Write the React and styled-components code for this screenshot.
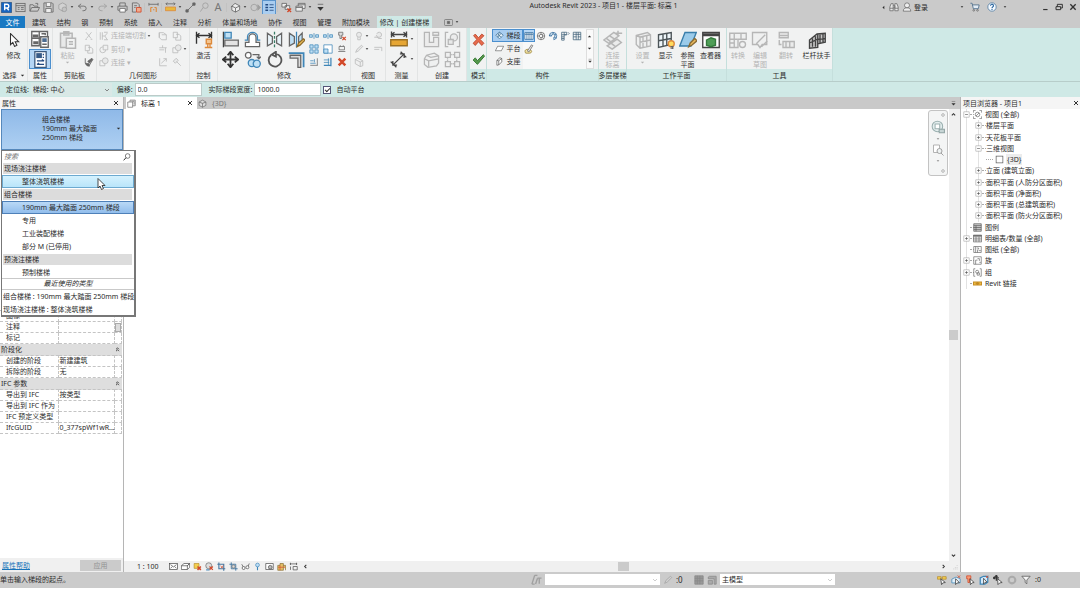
import { useState } from "react";
import styled, { createGlobalStyle, css } from "styled-components";

const GlobalStyle = createGlobalStyle`
    * { box-sizing: border-box; }

    body {
        margin: 0;
        background: #fff;
        color: #2b2b2b;
        font: 7px/11px "Noto Sans", "Noto Sans CJK SC", sans-serif;
    }

    button, input, select {
        margin: 0;
        padding: 0;
        border: 0;
        background: transparent;
        color: inherit;
        font: inherit;
    }

    button { cursor: default; white-space: nowrap; }
    ul { margin: 0; padding: 0; list-style: none; }
    svg { display: block; flex: none; }
`;

/* ---------- icons, all on a 24 unit grid ---------- */

const G = "#666";
const B = "#3f86b8";
const LB = "#bfe0f5";
const O = "#dd8a3c";
const R = "#d2492a";
const Y = "#e8b83c";

const shapes = {
    logo: <><rect width="24" height="24" rx="2" fill="#1765c0" /><path d="M8 18V5h5a4 4 0 0 1 0 8H8m5 0 4 5" fill="none" stroke="#fff" strokeWidth="3" /></>,
    home: <><rect x="2" y="3" width="20" height="18" /><path d="M2 8h20M6 12h4M6 16h4M13 12h6M13 16h6" /></>,
    open: <><path d="M2 20V6h7l2 3h8v3M2 20l4-8h17l-4 8z" /><path d="M14 3h5v4" /></>,
    save: <><path d="M2 2h18l2 2v18H2z" /><path d="M7 2v8h10V2M6 22v-8h12v8" fill="#eee" /></>,
    sync: <><path d="M4 6 12 2l8 4v9l-8 5-8-5z" fill="#ddd" /><circle cx="16" cy="16" r="5" fill="#bbb" /></>,
    undo: <path d="M9 4 3 9l6 5M3 9h12a5 5 0 0 1 0 10h-3" />,
    redo: <path d="m15 4 6 5-6 5m6-5H9a5 5 0 0 0 0 10h3" />,
    print: <><path d="M6 9V2h12v7M6 18H2V9h20v9h-4" /><path d="M6 14h12v8H6z" fill="#fff" /></>,
    pdf: <><path d="M3 2h11l4 4v8M3 2v20h8" /><path d="M12 12h10v10H12z" fill="#f2ab8c" stroke={R} /><path d="M7 8h6M7 12h3" /></>,
    measure: <><path d="M2 5h20M2 2v6M22 2v6" /><path d="M6 12v10M6 12h4M18 12v10M14 12h4M11 17h3" stroke={O} strokeWidth="2.500" /></>,
    ruler: <><path d="M2 4h20M5 1 2 4l3 3M19 1l3 3-3 3" /><path d="M1 11h22v8H1z" fill={Y} stroke={O} /></>,
    line: <><path d="M5 19 19 5" /><path d="M2 17h5v5H2zM17 2h5v5h-5z" fill={G} /></>,
    tag: <><circle cx="14" cy="8" r="6" /><path d="m9 12-6 9" /></>,
    house: <><path d="M2 11 11 3l11 6M4 10v8l8 4 9-5V9M12 22v-9L4 9m8 4 9-4" fill="#eee" /></>,
    section: <><circle cx="9" cy="12" r="7" /><path d="m17 6 6 6-6 6z" fill={G} /></>,
    thin: <><path d="M3 6h6M3 12h6M3 18h6" stroke="#234a80" strokeWidth="3" /><path d="M12 6h9M12 12h9M12 18h9" stroke="#234a80" /></>,
    closeWin: <><path d="M2 3h10v8H2zM9 8h10v8H9z" fill="#eee" /><path d="m14 14 8 8m0-8-8 8" stroke={R} strokeWidth="3" /></>,
    windows: <><path d="M2 9h14v11H2zM7 9V3h15v11h-6" fill="#eee" /><path d="M2 12h14M7 6h15" /></>,
    more: <><path d="M6 5h12" /><path d="M5 11h14l-7 8z" fill="#333" stroke="none" /></>,
    caret: <path d="M4 8h16l-8 9z" fill="currentColor" stroke="none" />,
    caretUp: <path d="M4 16h16l-8-9z" fill="currentColor" stroke="none" />,
    caretLeft: <path d="M16 4v16l-9-8z" fill="currentColor" stroke="none" />,
    chevDown: <path d="m4 8 8 8 8-8" strokeWidth="3" />,
    chevUp: <path d="m4 16 8-8 8 8" stroke="#333" strokeWidth="5" />,
    chevDownBold: <path d="m4 8 8 8 8-8" stroke="#333" strokeWidth="5" />,
    chevRight: <path d="m8 4 8 8-8 8" stroke="#333" strokeWidth="5" />,
    chevLeft: <path d="m16 4-8 8 8 8" stroke="#333" strokeWidth="5" />,
    collapse: <path d="m5 11 7-7 7 7M5 20l7-7 7 7" stroke="#333" strokeWidth="4" />,
    close: <path d="m4 4 16 16M20 4 4 20" stroke="#333" strokeWidth="4" />,
    play: <><rect x="1" y="4" width="22" height="16" rx="3" /><path d="M9 9h6v6H9z" fill={G} /></>,
    binoculars: <><path d="M2 21v-9l3-8h5v17zM22 21v-9l-3-8h-5v17zM10 9h4v5h-4M2 15h8M14 15h8" fill="#e6e6e6" /></>,
    user: <><circle cx="12" cy="8" r="6" fill="#eee" /><path d="M3 22c0-6 4-8 9-8s9 2 9 8z" fill="#eee" /></>,
    cart: <><path d="M1 3h4l3 13h12l2-9H6" fill="#e4edf5" stroke="#3c5f80" /><circle cx="9" cy="20" r="2" /><circle cx="18" cy="20" r="2" /></>,
    help: <><circle cx="12" cy="12" r="10" fill="#f5faff" stroke="#45729c" /><path d="M8.500 9a3.500 3.500 0 1 1 5 3c-1 .7-1.500 1-1.500 3M12 17v2" stroke="#1d5b97" strokeWidth="2.500" /></>,
    minimize: <path d="M4 19h15" stroke="#333" strokeWidth="4" />,
    restore: <><path d="M3 11h14v9H3zM7 11V4h15v11h-5" stroke="#333" strokeWidth="3" /></>,
    cursor: <path d="M6 1v19l4-4 3 7 4-2-3-6h6z" fill="#fff" stroke="#333" />,
    typeProps: <><path d="M1 2h10v9H1zM11 2h11v9H11zM1 11h10v10H1z" fill="#fff" /><path d="M13 9h10v14H13z" fill="#fff" /><path d="M15 11h6v5h-6z" fill="#4d6c91" stroke="none" /><path d="M3 7h6v2H3zM14 5h5v2M3 16h6v2H3M15 19h6" /></>,
    props: <><path d="M4 1h16v22H4z" fill="#fff" stroke="#3c5a7d" /><path d="M6 3h8v7H6z" fill="#375a86" stroke="none" /><path d="M16 4v2M16 8v2M7 14h10m-3-2 3 2M17 19H7m3-2-3 2" stroke="#234a80" /></>,
    paste: <><path d="M3 4h14v17H3zM7 2h6v4H7z" fill="#ddd" /><path d="M10 10h11v12H10z" fill="#f3f3f3" /><path d="M13 14h5M13 17h5" /></>,
    cut: <path d="m5 3 12 15M18 3 6 18M3 20h4M16 20h4" />,
    copyPage: <path d="M3 3h10v13H3zM10 8h7l4 4v10H9v-6" />,
    brush: <><path d="M3 3v12l5 5h5l8-14" stroke="#555" /><path d="m9 10 10-7 2 3-8 9zM4 15c0 5 4 7 9 7l-1-6z" fill="#666" /></>,
    cope: <path d="M3 3v18M8 3v18M8 12h6l6-7M14 12l6 9M12 3h9M12 21h9" />,
    boolCut: <><circle cx="9" cy="14" r="7" /><path d="M10 3h11v11H10z" fill="#eee" /></>,
    join: <><path d="M2 9h12v12H2z" /><circle cx="15" cy="9" r="7" fill="#ddd" /></>,
    slab: <path d="M3 4h10l7 5v12H9l-6-5zM3 4v12M9 9h11" />,
    wall: <path d="M3 9h18M3 14h12M11 3v6M18 9v12" />,
    split: <path d="M4 3v18h17M8 15 20 4M13 4h7v7" />,
    hammer: <path d="m3 10 7-7 5 5-7 7zM11 11l10 10" fill="#ddd" />,
    activate: <><path d="M2 1v16M22 1v9M2 6h20M6 3 2 6l4 3M18 3l4 3-4 3" stroke="#333" /><path d="M15 11h7v6h-7zM17 17v5m3-5v5M13 22h10" fill="#f4c590" stroke={O} /></>,
    align: <><path d="M2 1v22" stroke="#444" /><path d="M4 2h9v8H4z" fill={LB} stroke={B} /><path d="M4 13h19v8H4z" fill="#e3e3e3" /></>,
    offset: <><path d="M2 22h20v-6h-5V9a5 5 0 0 0-10 0v7H2z" fill="#fff" /><path d="M1 13h4V8a7 6 0 0 1 14 0v5h4" stroke={B} /></>,
    mirrorAxis: <><path d="M2 3v18l7-4V8zM22 3v18l-7-4V8z" fill="#e9f4fa" /><path d="M12 1v22" strokeDasharray="4 2" stroke="#3a7d67" /></>,
    mirrorDraw: <><path d="M2 3v18l7-4V8zM20 3v10l-5 4V8z" fill={LB} /><path d="M12 1v22" stroke={B} /><path d="m13 22 2-5 7-6 2 2-7 7z" fill="#efc25d" stroke="#8d6a29" /></>,
    move: <path d="M12 1v22M1 12h22M8 6l4-5 4 5M8 18l4 5 4-5M6 8l-5 4 5 4M18 8l5 4-5 4" stroke="#333" strokeWidth="2.500" />,
    copy: <><circle cx="6" cy="6" r="4" fill="#fff" /><circle cx="11" cy="17" r="5" fill={LB} stroke={B} /><circle cx="18" cy="18" r="5" fill={LB} stroke={B} /><path d="M12 5h9v5m-3-2 3 3 3-3" /></>,
    rotate: <path d="M14 4a9 9 0 1 1-7 2M14 1v7L8 5z" stroke="#555" strokeWidth="2.500" />,
    trim: <><path d="M3 6h15v17h-4V10H3z" fill="#dcdcdc" /><path d="M1 3h21v20" stroke={B} strokeWidth="2.500" /></>,
    splitEl: <path d="M1 9h7v6H1zM16 9h7v6h-7zM12 5v14" fill={LB} stroke={B} />,
    array: <path d="M2 2h8v8H2zM14 2h8v8h-8zM2 14h8v8H2zM14 14h8v8h-8z" fill={LB} stroke={B} />,
    scale: <><path d="M2 2h20v20H2z" fill="#fff" stroke={B} /><path d="M2 12h10v10H2z" fill={LB} stroke={B} /></>,
    pin: <><path d="M4 3h10v7h-3v8H7v-8H4z" fill="#ddd" /><path d="m13 14 8 8m0-8-8 8" stroke={R} strokeWidth="3" /></>,
    unpin: <path d="M5 6h13v8H5zM3 18h17M8 3v3M15 3v3" />,
    trimOne: <><path d="M3 15h13M3 9h8m2-4v8" stroke={B} /><path d="M20 3v18M3 20h17" /></>,
    trimMany: <><path d="M2 7h13M2 13h13M13 3v17" stroke={B} /><path d="M19 2v20M2 20h17" strokeWidth="3" stroke={B} /></>,
    redX: <path d="m4 4 16 16M20 4 4 20" stroke={R} strokeWidth="6" />,
    bulb: <><circle cx="12" cy="9" r="6" fill="#ddd" /><path d="M9 15v6h6v-6" /></>,
    pencilLine: <path d="m4 20 3-7L18 3l3 3-11 11z" fill="#ddd" />,
    cube: <path d="m3 6 6-3 12 6v12l-6 2L3 16zM3 6l12 6 6-3M15 12v11" fill="#eee" />,
    hide: <path d="M3 15h12a6 6 0 1 0-6-8M8 10l5 8h8" fill="#ddd" />,
    linework: <path d="M3 8h18v9M3 13h12" />,
    measureBig: <><path d="M2 6h20M2 2v8M22 2v8M6 3 2 6l4 3M18 3l4 3-4 3" stroke="#444" /><path d="M1 13h22v8H1z" fill="#e6a634" stroke="#9b7125" /></>,
    measureDiag: <path d="M4 20 20 4M1 15l8 8M15 1l8 8M4 14v6h6M14 4h6v6" stroke="#444" />,
    createSim: <path d="M2 2v20h20V9h-7v7H9V2zM14 2h8v4h-8z" fill="#e6e6e6" />,
    group: <><path d="M6 2H2v20h4M18 2h4v20h-4" /><circle cx="14" cy="9" r="5" fill="#e6e6e6" /><path d="M6 12h7v7H6z" fill="#ddd" /></>,
    createBox: <path d="m2 11 3-5 11-3 6 4v10l-3 4-12 2-5-4zM2 11l6 3 14-3M8 14v8M5 6l6 3 11-2" fill="#eee" />,
    assembly: <><path d="M2 2h7v7H2zM15 2h7v7h-7zM2 15h7v7H2zM15 15h7v7h-7z" fill="#eee" /><path d="M9 5h6M5 9v6M18 9v6M9 18h6" strokeDasharray="2 1" /></>,
    cancel: <path d="m3 5 3-3 6 7 6-7 4 3-7 7 7 7-4 4-6-7-6 7-4-4 7-7z" fill="#e86a4c" stroke="#bd5037" />,
    finish: <path d="m2 13 4-4 4 5L21 3l2 3-13 15z" fill="#56984c" stroke="#397a35" />,
    run: <path d="m2 11 10-8 10 8-10 10zM7 8l10 9M12 3 7 16M16 6l-8 12" fill="#e8f3fb" stroke="#37698d" />,
    landing: <path d="M7 6h16l-6 12H1z" fill="#fff" />,
    support: <path d="M5 22V9l8-7 5 2v9l-8 8zM10 21V10l8-6M5 9l5 1" fill="#fff" stroke="#555" />,
    straight: <path d="M2 4h20v16H2zM7 4v16M12 4v16M17 4v16M2 8h20" fill="#fff" stroke="#2e6697" />,
    spiral: <><circle cx="12" cy="12" r="9" /><circle cx="12" cy="12" r="4" /><path d="M12 3v5M21 12h-5M12 16v5M3 12h5M18 6l-3 3M18 18l-3-3" /></>,
    arcStair: <path d="M3 12a9 9 0 1 1 11 9v-6a4 4 0 1 0-5-4M3 12l3-3 3 3zM12 3v5M20 8l-5 2M20 17l-5-2" fill="#e6f3fc" stroke="#2e6697" />,
    lWinder: <path d="M4 22V3h12v6H10v13zM4 9h12M4 14h6M4 18h6M10 3v6M19 3l3 3-3 3" stroke="#3f6079" />,
    uWinder: <path d="M3 3h18v18M3 8h18M3 14h8M14 14h7M3 3v18h18M10 3v18M15 3v18" stroke="#3f6079" />,
    sketch: <><path d="M4 22c-4-7 0-10 8-9s9 9 0 9z" fill="#f4e5a4" stroke="#927b31" /><path d="m8 17 10-15 3 2-9 15z" fill="#eee" /></>,
    multi: <path d="M1 12 13 3l6 4-12 9zM5 19l12-8 5 4-11 8zM18 1v7M15 4h8M4 10l5 4M8 7l6 4M10 16l5 4" fill="#e4e4e4" />,
    setPlane: <path d="m3 6 15-4 4 3v15L8 23l-5-5zM3 6l5 2v15M8 8l14-3M12 7v15M17 6v15M8 15l14-3" fill="#eee" />,
    showPlane: <><path d="m2 5 17-3v16L2 22zM2 13l17-3M8 4v17M13 3v16" fill="#edf5f9" stroke="#4c5458" /><circle cx="19" cy="17" r="4" fill="#ffdc5f" stroke={O} /><path d="M18 21h3v3h-3" /></>,
    refPlane: <><path d="M8 2h15l-7 18H1z" fill="#9bcbea" stroke="#397eab" /><path d="m13 21 2-5 6-6 3 3-7 6z" fill="#e7b75b" stroke="#896b35" /></>,
    viewer: <><path d="M1 2h22v20H1z" fill="#fff" stroke="#444" /><path d="M1 5h22" stroke="#444" strokeWidth="4" /><path d="m6 12 6-3 6 2v8l-6 2-6-2z" fill="#4f9e57" stroke="#347a3d" /></>,
    convert: <><path d="M1 3h22v8H12v11H1zM1 11h10M7 3v19M16 3v8M1 16h6" fill="#eee" /><circle cx="18" cy="18" r="4" /></>,
    editSketch: <path d="M2 2h19v16h-6l-3 4-3-4H2zM7 17l12-12M14 21l8-8" fill="#eee" />,
    flip: <path d="M3 2h12v7H3zM8 14h15v8H8zM3 12v6h3M3 6h12M12 14v8M17 14v8" fill="#e5e5e5" />,
    railing: <path d="M2 12 12 4l11-1v12l-10 2v5L2 23zM2 16l11-5 10-1M6 10v11M10 7v14M16 5v11M20 4v11M13 4v17" fill="#c8c8c8" stroke="#444" />,
    viewTab: <><path d="M2 8h13v14H2z" fill="#fff" /><path d="M8 8V3h14v15h-7M12 6h7M19 6v9" /></>,
    cube3d: <><path d="m3 8 9-5 9 5v9l-9 5-9-5zM3 8l9 4 9-4M12 12v10" fill="#ddd" /></>,
    search: <><circle cx="14" cy="9" r="7" stroke="#333" /><path d="m9 14-7 8" stroke="#333" strokeWidth="3" /></>,
    plus: <><rect x="3" y="3" width="18" height="18" fill="#fff" stroke="#999" /><path d="M7 12h10M12 7v10" stroke="#333" /></>,
    minus: <><rect x="3" y="3" width="18" height="18" fill="#fff" stroke="#999" /><path d="M7 12h10" stroke="#333" /></>,
    views: <><circle cx="12" cy="12" r="6" /><path d="M1 7V1h6M17 1h6v6M23 17v6h-6M7 23H1v-6M8 16l8-8" /></>,
    square: <rect x="3" y="3" width="18" height="18" stroke="#555" fill="#fff" />,
    legend: <><path d="M2 2h20v20H2z" fill="#ccc" stroke="#555" /><path d="M2 7h20M2 12h20M2 17h20M8 7v15" stroke="#555" /></>,
    schedule: <><path d="M1 3h22v18H1z" fill="#fff" stroke="#555" /><path d="M1 5h22" strokeWidth="4" /><path d="M1 11h22M1 16h22M8 7v14M16 7v14" /></>,
    sheet: <path d="M2 4h20v16H2zM7 4v16M10 8h5v4M15 15h6M12 12v8" fill="#fff" />,
    family: <path d="M2 2h20v20H2zM7 22V11h5M12 7h5v6M17 17h4" fill="#fff" />,
    groups: <><path d="M6 2H2v20h4M18 2h4v20h-4" /><circle cx="11" cy="10" r="4" /><path d="M11 13h6v6h-6z" /></>,
    link: <path d="M1 8h10v8H1zM13 8h10v8H13zM7 12h10" fill="#f0bc42" stroke="#c28a22" strokeWidth="3" />,
    detail: <><rect x="1" y="4" width="22" height="16" fill="#fff" stroke="#444" /><path d="m4 7 8 6 8-6M4 17l5-5M20 17l-5-5" stroke="#444" /></>,
    shade: <path d="M8 4h15l-6 6v10H1V10zM1 10h16l6-6v10l-6 6" fill="#fff" stroke="#444" />,
    sun: <><path d="M3 4h13v13H3z" fill="#f3cf50" stroke="#b78c2d" /><path d="m12 12 9 9m0-9-9 9" stroke={R} strokeWidth="4" /></>,
    shadow: <><circle cx="10" cy="10" r="8" fill="#ddd" /><path d="m12 12 9 9m0-9-9 9" stroke={R} strokeWidth="3" /><path d="M3 21h9" stroke={B} strokeWidth="3" /></>,
    crop: <><path d="M5 1v17h17M1 6h17v17" stroke="#4677a0" strokeWidth="3" /><path d="m9 10 8 7M17 9l-7 8" stroke={R} /></>,
    cropRegion: <><path d="M6 1v17h17M1 6h17v17" stroke="#4677a0" strokeWidth="2.500" /><circle cx="12" cy="12" r="4" fill="#ddd" /></>,
    glasses: <><path d="m2 6 4 7M22 4l-3 7" stroke="#444" /><circle cx="7" cy="16" r="4" fill="#fff" stroke="#444" /><circle cx="17" cy="14" r="4" fill="#fff" stroke="#444" /></>,
    reveal: <><circle cx="12" cy="8" r="5" fill="#bfdff7" stroke={B} /><path d="M12 13v9" stroke={B} strokeWidth="3" /></>,
    temp: <><path d="M2 4h20v16H2z" fill="#fff" stroke="#444" /><circle cx="14" cy="14" r="5" fill="#bbb" stroke="#444" /></>,
    analysis: <><path d="M2 22V9h6V4h9v18zM17 9h6v13" fill="#e4c067" stroke="#856c31" /><path d="M8 9v13M3 14h18" stroke={R} /></>,
    constraint: <><path d="M2 5h20M4 2v6M20 2v6" stroke="#444" /><path d="M11 12h11v9H11zM4 12v9" stroke="#444" /></>,
    work: <path d="M2 22 8 3M2 22h6M8 3h6M14 9h9M18 9v12M10 22l4-12" strokeWidth="3" />,
    grid: <path d="M2 2h20v20H2zM2 8h20M2 14h20M8 2v20M14 2v20" fill="#999" stroke="#888" />,
    option: <path d="M6 3h16v19h-5V9H3V5zM3 13h10v9H3z" fill="#aaa" stroke="#888" />,
    selLink: <><path d="M1 4h9v6H1zM13 4h9v6h-9z" fill="#f3cf50" stroke="#b78c2d" /><path d="m9 9 11 9-6 1-3 4z" fill="#fff" stroke="#333" /></>,
    selUnder: <><path d="M2 10 12 5l10 4v10H2z" fill="#e1effa" stroke={B} /><path d="m11 9 9 9-5 1-4 4z" fill="#fff" stroke="#333" /><path d="m16 1 6 6M22 1l-6 6" stroke={R} /></>,
    selPin: <><path d="M4 2h10v7h-3v9H7V9H4z" fill="#fa9b75" stroke={R} /><path d="m12 9 10 9-5 1-4 4z" fill="#fff" stroke="#333" /></>,
    selFace: <><path d="m3 7 8-4h10v14l-7 5H3z" fill="#d3eafb" stroke={B} strokeWidth="3" /><path d="m11 8 8 9-5 1-3 4z" fill="#fff" stroke="#333" /><path d="m17 2 5 5M22 2l-5 5" stroke={R} /></>,
    drag: <><path d="M8 1v13M1 7h13M5 4l3-3 3 3M4 4 1 7l3 3" stroke="#333" strokeWidth="3" /><path d="m11 9 11 9-6 1-4 4z" fill="#fff" stroke="#333" /></>,
    ring: <circle cx="12" cy="12" r="8" stroke="#aaa" strokeWidth="5" />,
    filter: <path d="M2 3h20l-8 9v9l-4-3v-6z" fill="#f5f5f5" stroke="#555" />,
    grip: <path d="M21 8v1M15 14v1M21 14v1M9 20v1M15 20v1M21 20v1" strokeWidth="3" stroke="#888" />,
    wheel: <><circle cx="11" cy="11" r="9" fill="#e4eeee" stroke="#9bb0b0" /><path d="M7 7h8v8H7z" fill="#fff" stroke="#9bb0b0" /><path d="M14 16h9v6h-9z" fill="#c8d6d6" stroke="#91a4a4" /></>,
    zoomRegion: <><path d="M3 2h12v15H3z" fill="#fff" stroke="#aaa" /><circle cx="15" cy="14" r="5" fill="#eef2f2" stroke="#999" /><path d="m18 18 5 5" stroke="#999" /></>,
};

const Svg = styled.svg`
    width: ${props => props.$size}px;
    height: ${props => props.$size}px;
    fill: none;
    stroke: ${G};
    stroke-width: 1.8;
    opacity: ${props => props.$dim ? 0.42 : 1};
`;

const Glyph = ({ name, size = 10, dim }) => (
    <Svg viewBox="0 0 24 24" $size={size} $dim={dim} aria-hidden="true">{shapes[name]}</Svg>
);

/* ---------- frame ---------- */

const Page = styled.div`
    display: flex;
    flex-direction: column;
    height: 100vh;
    min-height: 500px;
    padding-bottom: 20px;
`;

const TitleBar = styled.header`
    display: flex;
    align-items: center;
    height: 14px;
    padding-left: 1px;
    background: #cacaca;
`;

const Tools = styled.div`
    display: flex;
    align-items: center;
    gap: 2px;
`;

const ToolButton = styled.button`
    display: grid;
    place-items: center;
    width: ${props => props.$w || 12}px;
    height: 13px;
    ${props => props.$active && css`
        background: #a9cdf0;
        box-shadow: 0 0 0 1px #5a94cc;
    `}
`;

const Divider = styled.span`
    width: 1px;
    height: 9px;
    background: #c2c2c2;
`;

const LetterTool = styled.span`
    color: #777;
    font-size: 11px;
    line-height: 12px;
`;

const Title = styled.h1`
    flex: 1;
    margin: 0;
    padding-bottom: 3px;
    font-size: 7px;
    font-weight: 400;
    text-align: center;
`;

const Account = styled(Tools)`
    width: 79px;
`;

const Store = styled(Tools)`
    width: 79px;
    gap: 5px;
`;

const WindowButtons = styled(Tools)`
    padding-right: 1px;
`;

const TabRow = styled.nav`
    display: flex;
    align-items: stretch;
    height: 14px;
    padding-top: 2px;
    background: #cacaca;
`;

const FileTab = styled.button`
    width: 25px;
    background: #1979c3;
    color: #fff;
`;

const TabList = styled.div`
    display: flex;
    justify-content: space-between;
    width: 352px;
    padding: 0 7px;
`;

const Tab = styled.button``;

const ActiveTab = styled.button`
    width: 55px;
    background: #cfe9e6;
`;

const PlayTab = styled.button`
    display: flex;
    align-items: center;
    gap: 2px;
    margin-left: 12px;
`;

/* ---------- ribbon ---------- */

const Ribbon = styled.div`
    display: flex;
    height: 54px;
    border-bottom: 1px solid #b7cdca;
    background: #cfe9e6;
`;

const Panel = styled.section`
    display: flex;
    flex: none;
    flex-direction: column;
    width: ${props => props.$w}px;
    margin-left: ${props => props.$apart ? 3 : 0}px;
    border-right: 1px solid ${props => props.$context ? '#c5dfdc' : '#e2e4e4'};
    background: ${props => props.$context ? '#cfe9e6' : '#f1f2f2'};
`;

const PanelBody = styled.div`
    display: flex;
    justify-content: center;
    height: 41px;
    padding-top: 1px;
    background: #f1f2f2;
`;

const PanelTitle = styled.h2`
    display: flex;
    align-items: center;
    justify-content: center;
    gap: 3px;
    margin: 0;
    height: 12px;
    font-size: 7px;
    font-weight: 400;
    white-space: nowrap;
`;

const Big = styled.button`
    display: flex;
    flex-direction: column;
    align-items: center;
    width: ${props => props.$w || 22}px;
    padding-top: 1px;
    line-height: 9px;
    color: ${props => props.$dim ? '#b4b4b4' : '#333'};
`;

const BigIcon = styled.span`
    display: grid;
    place-items: center;
    height: 20px;
    margin-bottom: 1px;
`;

const Grid = styled.div`
    display: grid;
    grid-template-columns: ${props => props.$cols};
    align-content: ${props => props.$top ? 'start' : 'space-evenly'};
    align-items: center;
`;

const IconButton = styled.button`
    display: grid;
    place-items: center;
    height: ${props => props.$h || 13}px;
    ${props => props.$active && css`
        border: 1px solid #4b8fce;
        background: #b5d6f5;
    `}
`;

const DimText = styled.span`
    color: #b4b4b4;
    white-space: nowrap;
`;

const MenuStack = styled.div`
    display: flex;
    flex-direction: column;
    width: 31px;
`;

const MenuButton = styled.button`
    display: flex;
    align-items: center;
    gap: 3px;
    height: 13px;
    padding-left: 2px;
    border: 1px solid ${props => props.$active ? '#4b8fce' : 'transparent'};
    background: ${props => props.$active ? '#a9cdf0' : 'transparent'};
`;

const Gallery = styled.div`
    display: grid;
    grid-template: repeat(3, 13px) / repeat(5, 12px);
    width: 63px;
    background: #f7f8f8;
`;

const GalleryScroll = styled.div`
    display: flex;
    flex-direction: column;
    justify-content: space-around;
    width: 8px;
    border: 1px solid #dedede;
    background: #fafafa;
`;

/* ---------- options bar ---------- */

const OptionsBar = styled.form`
    display: flex;
    align-items: center;
    height: 15px;
    padding-left: 1px;
    background: #cfe9e6;

    label {
        padding-left: 5px;
        white-space: nowrap;
    }
`;

const Picker = styled.span`
    display: grid;
    flex: none;
    align-items: center;
    width: ${props => props.$w}px;
    height: ${props => props.$h || 13}px;
    background: ${props => props.$tint || '#fff'};

    & > * { grid-area: 1 / 1; }
    & > svg { justify-self: end; margin-right: 2px; pointer-events: none; }

    select {
        width: 100%;
        height: 100%;
        padding-left: 2px;
        appearance: none;
    }
`;

const Field = styled.input`
    width: 67px;
    height: 13px;
    margin: 0 2px;
    padding-left: 2px;
    border: 1px solid #bccbc9;
    background: #fff;
`;

const Check = styled.input`
    display: grid;
    place-items: center;
    width: 8px;
    height: 8px;
    border: 1px solid #557;
    background: #fff;
    appearance: none;

    &:checked::after {
        content: "";
        width: 4px;
        height: 2px;
        border: solid #333;
        border-width: 0 0 1px 1px;
        transform: rotate(-45deg);
    }
`;

/* ---------- work area ---------- */

const Work = styled.main`
    display: flex;
    flex: 1;
    min-height: 0;
`;

const Side = styled.aside`
    position: relative;
    display: flex;
    flex: none;
    flex-direction: column;
    width: ${props => props.$w}px;
    border-right: ${props => props.$browser ? '0' : '1px solid #b5b5b5'};
    border-left: ${props => props.$browser ? '1px solid #b5b5b5' : '0'};
`;

const SideHeader = styled.div`
    display: flex;
    align-items: center;
    justify-content: space-between;
    height: 12px;
    padding: 0 1px 0 2px;
    background: #f5f5f5;
`;

const TypeSelector = styled.button`
    display: flex;
    align-items: center;
    justify-content: space-between;
    height: 41px;
    margin-left: 1px;
    padding: 0 1px 2px 40px;
    border: 1px solid #5688bb;
    background: linear-gradient(#8fb9e8, #aed0f2);
    line-height: 9px;
    text-align: left;
`;

const TypeMenu = styled.div`
    position: absolute;
    z-index: 2;
    top: 53px;
    left: 1px;
    width: 135px;
    border: 1px solid #777;
    border-width: 1px 2px 2px 1px;
    background: #fff;
`;

const SearchRow = styled.label`
    display: flex;
    align-items: center;
    height: 11px;
    padding: 0 3px 0 2px;

    input {
        width: 100%;
        outline: none;
        font-style: italic;
    }
`;

const MenuGroup = styled.div`
    height: 13px;
    padding-left: 1px;
    border: 1px solid #fff;
    border-right-width: 2px;
    background: #dcdcdc;
`;

const MenuItem = styled.button`
    display: block;
    width: 100%;
    height: ${props => props.$short ? 12 : 13}px;
    padding-left: ${props => props.$flush ? 0 : 19}px;
    border: 1px solid transparent;
    text-align: left;
    ${props => props.$hover && css`
        border-color: #6caad0;
        background: linear-gradient(#d5f2fe, #b9e5fa);
    `}
    ${props => props.$selected && css`
        border-color: #4e80b8;
        background: linear-gradient(#b9d9f6, #92bdec);
    `}
`;

const Recent = styled.div`
    height: 12px;
    border-top: 1px solid #c9c9c9;
    border-bottom: 1px solid #c9c9c9;
    font-style: italic;
    line-height: 10px;
    text-align: center;
`;

const Pointer = styled.span`
    position: absolute;
    top: 27px;
    left: 93px;
`;

const PropertyArea = styled.div`
    flex: 1;
    padding: 160px 1px 0 0;
`;

const PropertyTable = styled.table`
    width: 100%;
    border-collapse: collapse;
    table-layout: fixed;

    td, th {
        height: 11px;
        padding: 0 0 0 1px;
        border: 1px dashed #c4c4c4;
        font-weight: 400;
        line-height: 10px;
        text-align: left;
        white-space: nowrap;
    }

    th[scope="row"] {
        padding-left: 6px;
        border-left: 0;
    }

    td:last-child { padding: 0; }
`;

const GroupRow = styled.tr`
    background: #dedede;

    && th {
        height: 12px;
        padding-left: 1px;
        border: 0;
    }
    && td { border: 0; }
`;

const Thumb = styled.span`
    display: block;
    width: 6px;
    height: 9px;
    border: 1px solid #aaa;
    background: #ddd;
`;

const SideFooter = styled.div`
    display: flex;
    align-items: center;
    justify-content: space-between;
    height: 14px;
    padding: 0 2px;
    background: #f0f0f0;

    a { color: #1873b9; }

    button {
        width: 41px;
        height: 11px;
        background: #cbcbcb;
        color: #929292;
    }
`;

const Center = styled.section`
    display: flex;
    flex: 1;
    flex-direction: column;
    min-width: 0;
`;

const ViewTabs = styled.div`
    display: flex;
    align-items: center;
    height: 12px;
    padding: 0 3px 0 2px;
    background: #c9c9c9;
`;

const ViewTab = styled.div`
    display: flex;
    align-items: center;
    gap: 5px;
    width: ${props => props.$active ? 71 : 40}px;
    height: 12px;
    padding: 0 4px 0 1px;
    background: ${props => props.$active ? '#fff' : 'transparent'};
    color: ${props => props.$active ? '#222' : '#777'};

    & > button { margin-left: auto; }
`;

const TabMenu = styled.button`
    margin-left: auto;
`;

const Canvas = styled.div`
    position: relative;
    display: flex;
    flex: 1;
    justify-content: flex-end;
    background: #fff;
`;

const NavBar = styled.div`
    position: absolute;
    top: 1px;
    right: 12px;
    display: flex;
    flex-direction: column;
    align-items: center;
    gap: 3px;
    width: 20px;
    height: 66px;
    padding: 2px;
    border: 1px solid #c3c3c3;
    border-radius: 3px;
    background: #f4f5f5;
    color: #888;

    & > :first-child, & > :last-child { align-self: flex-end; }
    & > :last-child { margin-top: auto; }
`;

const VScroll = styled.div`
    display: flex;
    flex-direction: column;
    align-items: center;
    justify-content: space-between;
    width: 11px;
    padding: 3px 2px 3px 0;
    background: #f0f0f0;

    span {
        width: 9px;
        height: 10px;
        background: #cbcbcb;
    }
`;

const ViewBar = styled.div`
    display: flex;
    align-items: center;
    height: 11px;
    padding: 0 2px 0 13px;
    background: #f0f0f0;
`;

const Scale = styled.button`
    width: 30px;
    text-align: left;
`;

const ViewIcons = styled.div`
    display: flex;
    align-items: center;

    button {
        display: grid;
        place-items: center;
        width: 12px;
        height: 11px;
    }
`;

const HScroll = styled.div`
    display: flex;
    flex: 1;
    align-items: center;
    justify-content: flex-end;
    gap: 5px;

    span {
        width: 11px;
        height: 9px;
        margin: 0 auto;
        background: #cbcbcb;
    }
`;

/* ---------- project browser ---------- */

const Tree = styled.ul`
    display: grid;
    grid-auto-rows: 1fr;
    height: 180px;
    padding-left: 1px;
`;

const TreeRow = styled.li`
    display: flex;
    align-items: center;
    gap: 2px;
    padding-left: ${props => props.$level * 12}px;
    background:
        linear-gradient(#e2e2e2, #e2e2e2) 4px 0 / 1px 100% no-repeat,
        linear-gradient(#e2e2e2, #e2e2e2) 16px 0 / ${props => props.$level > 0 ? 1 : 0}px 100% no-repeat;
    line-height: 11px;
    white-space: nowrap;
`;

const Toggle = styled.button`
    display: grid;
    place-items: center;
    width: 9px;
    height: 9px;
`;

const Branch = styled.span`
    width: ${props => props.$deep ? 7 : 4}px;
    margin: 0 ${props => props.$deep ? 0 : -3}px;
    border-top: 1px dotted #aaa;
`;

const Leaf = styled.span`
    padding: 0 1px;
    background: ${props => props.$selected ? '#ececec' : 'transparent'};
`;

/* ---------- status bar ---------- */

const StatusBar = styled.footer`
    display: flex;
    align-items: center;
    height: 16px;
    padding: 0 39px 1px 0;
    background: #cbcbcb;
`;

const Message = styled.span`
    flex: 0 0 51%;
`;

const Worksets = styled.div`
    display: flex;
    align-items: center;
    gap: 3px;
`;

const Count = styled.span`
    width: 15px;
    font-size: 8px;
`;

const Selection = styled.div`
    display: flex;
    align-items: center;
    gap: 4px;
    margin-left: auto;
`;

const quickTools = [
    ["home", "主页"], ["open", "打开"], ["save", "保存"], ["sync", "同步", "dim"], ".",
    ["undo", "放弃"], ".", ["redo", "重做", "dim"], ".", ["print", "打印"], ["pdf", "导出"], "|",
    ["measure", "激活尺寸"], "|", ["ruler", "测量"], ".", ["line", "对齐标注"], ["tag", "标记", "dim"],
    ["A", "文字"], "|", ["house", "三维视图"], ".", ["section", "剖面", "dim"], ["thin", "细线", "active"], "|",
    ["closeWin", "关闭隐藏"], ["windows", "切换窗口"], ".", ["more", "自定义"],
];

const tabs = ["建筑", "结构", "钢", "预制", "系统", "插入", "注释", "分析", "体量和场地", "协作", "视图", "管理", "附加模块"];

const modifyBig = ["align", "offset", "mirrorAxis", "mirrorDraw", "move", "copy", "rotate", "trim"];
const modifySmall = ["splitEl", "splitEl", "pin", "array", "scale", "unpin", "trimOne", "trimMany", "redX"];

const properties = [
    ["图像", ""], ["注释", "", "thumb"], ["标记", ""],
    ["阶段化"], ["创建的阶段", "新建建筑"], ["拆除的阶段", "无"],
    ["IFC 参数"], ["导出到 IFC", "按类型"], ["导出到 IFC 作为", ""], ["IFC 预定义类型", ""], ["IfcGUID", "0_377spWf1wR..."],
];

const browser = [
    { text: "视图 (全部)", level: 0, toggle: "minus", icon: "views" },
    { text: "楼层平面", level: 1, toggle: "plus" },
    { text: "天花板平面", level: 1, toggle: "plus" },
    { text: "三维视图", level: 1, toggle: "minus" },
    { text: "{3D}", level: 2, icon: "square", selected: true },
    { text: "立面 (建筑立面)", level: 1, toggle: "plus" },
    { text: "面积平面 (人防分区面积)", level: 1, toggle: "plus" },
    { text: "面积平面 (净面积)", level: 1, toggle: "plus" },
    { text: "面积平面 (总建筑面积)", level: 1, toggle: "plus" },
    { text: "面积平面 (防火分区面积)", level: 1, toggle: "plus" },
    { text: "图例", level: 0, icon: "legend" },
    { text: "明细表/数量 (全部)", level: 0, toggle: "plus", icon: "schedule" },
    { text: "图纸 (全部)", level: 0, icon: "sheet" },
    { text: "族", level: 0, toggle: "plus", icon: "family" },
    { text: "组", level: 0, toggle: "plus", icon: "groups" },
    { text: "Revit 链接", level: 0, icon: "link" },
];

const viewControls = ["detail", "shade", "sun", "shadow", "crop", "cropRegion", "glasses", "reveal", "temp", "analysis", "constraint", "chevLeft"];
const selectionTools = ["selLink", "selUnder", "selPin", "selFace", "drag", "ring"];

const RibbonPanel = ({ title, w, context, apart, caret, children }) => (
    <Panel $w={w} $context={context} $apart={apart}>
        <PanelBody>{children}</PanelBody>
        <PanelTitle>{title}{caret && <Glyph name="caret" size={5} />}</PanelTitle>
    </Panel>
);

const BigTool = ({ icon, size = 20, lines = [], w, dim, caret }) => (
    <Big $w={w} $dim={dim} aria-label={lines.join("") || icon}>
        <BigIcon><Glyph name={icon} size={size} dim={dim} /></BigIcon>
        {lines.map(line => <span key={line}>{line}</span>)}
        {caret && <Glyph name="caret" size={5} />}
    </Big>
);

const SmallTool = ({ icon, size = 10, h, dim, active }) => (
    <IconButton $h={h} $active={active} aria-label={icon}>
        <Glyph name={icon} size={size} dim={dim} />
    </IconButton>
);

function QuickAccess() {
    return (
        <Tools>
            <Glyph name="logo" size={11} />
            {quickTools.map((tool, i) => {
                if (tool === ".") return <Glyph key={i} name="caret" size={4} />;
                if (tool === "|") return <Divider key={i} />;
                const [icon, label, state] = tool;
                return (
                    <ToolButton key={i} aria-label={label} $active={state === "active"}>
                        {icon === "A" ? <LetterTool>A</LetterTool> : <Glyph name={icon} size={11} dim={state === "dim"} />}
                    </ToolButton>
                );
            })}
        </Tools>
    );
}

function RibbonPanels() {
    return (
        <Ribbon>
            <RibbonPanel title="选择" w={28} caret>
                <BigTool icon="cursor" size={14} lines={["修改"]} />
            </RibbonPanel>
            <RibbonPanel title="属性" w={25}>
                <Grid $cols="22px" $top>
                    <SmallTool icon="typeProps" size={18} h={20} />
                    <SmallTool icon="props" size={17} h={20} active />
                </Grid>
            </RibbonPanel>
            <RibbonPanel title="剪贴板" w={44}>
                <BigTool icon="paste" lines={["粘贴"]} w={28} dim caret />
                <Grid $cols="14px">
                    <SmallTool icon="cut" dim />
                    <SmallTool icon="copyPage" dim />
                    <SmallTool icon="brush" />
                </Grid>
            </RibbonPanel>
            <RibbonPanel title="几何图形" w={93}>
                <Grid $cols="14px 36px 9px 14px 13px 6px">
                    <SmallTool icon="cope" dim /><DimText>连接端切割</DimText><Glyph name="caret" size={4} />
                    <SmallTool icon="slab" dim /><SmallTool icon="copyPage" dim /><span />
                    <SmallTool icon="boolCut" dim /><DimText>剪切 ▾</DimText><span />
                    <SmallTool icon="wall" dim /><SmallTool icon="join" dim /><Glyph name="caret" size={4} />
                    <SmallTool icon="join" dim /><DimText>连接 ▾</DimText><span />
                    <SmallTool icon="split" dim /><SmallTool icon="hammer" dim /><span />
                </Grid>
            </RibbonPanel>
            <RibbonPanel title="控制" w={28}>
                <BigTool icon="activate" size={18} lines={["激活"]} />
            </RibbonPanel>
            <RibbonPanel title="修改" w={133}>
                <Grid $cols="repeat(4, 22px)" $top>
                    {modifyBig.map(icon => <SmallTool key={icon} icon={icon} size={17} h={20} />)}
                </Grid>
                <Grid $cols="repeat(3, 14px)">
                    {modifySmall.map((icon, i) => <SmallTool key={i} icon={icon} />)}
                </Grid>
            </RibbonPanel>
            <RibbonPanel title="视图" w={35}>
                <Grid $cols="13px 6px 13px">
                    <SmallTool icon="bulb" dim /><Glyph name="caret" size={4} /><SmallTool icon="hide" dim />
                    <SmallTool icon="pencilLine" dim /><Glyph name="caret" size={4} /><SmallTool icon="linework" dim />
                    <SmallTool icon="cube" dim />
                </Grid>
            </RibbonPanel>
            <RibbonPanel title="测量" w={32}>
                <Grid $cols="23px 6px" $top>
                    <SmallTool icon="measureBig" size={18} h={20} /><Glyph name="caret" size={4} />
                    <SmallTool icon="measureDiag" size={17} h={20} /><Glyph name="caret" size={4} />
                </Grid>
            </RibbonPanel>
            <RibbonPanel title="创建" w={49}>
                <Grid $cols="21px 21px" $top>
                    {["createSim", "group", "createBox", "assembly"].map(icon => (
                        <SmallTool key={icon} icon={icon} size={17} h={20} dim />
                    ))}
                </Grid>
            </RibbonPanel>

            <RibbonPanel title="模式" w={17} context apart>
                <Grid $cols="16px" $top>
                    <SmallTool icon="cancel" size={13} h={20} />
                    <SmallTool icon="finish" size={13} h={20} />
                </Grid>
            </RibbonPanel>
            <RibbonPanel title="构件" w={112} context>
                <MenuStack>
                    <MenuButton $active><Glyph name="run" size={9} />梯段</MenuButton>
                    <MenuButton><Glyph name="landing" size={9} />平台</MenuButton>
                    <MenuButton><Glyph name="support" size={9} />支座</MenuButton>
                </MenuStack>
                <Gallery>
                    <SmallTool icon="straight" active />
                    <SmallTool icon="spiral" />
                    <SmallTool icon="arcStair" />
                    <SmallTool icon="lWinder" />
                    <SmallTool icon="uWinder" />
                    <SmallTool icon="sketch" />
                </Gallery>
                <GalleryScroll>
                    <Glyph name="caretUp" size={5} />
                    <Glyph name="caret" size={5} />
                    <Glyph name="more" size={6} />
                </GalleryScroll>
            </RibbonPanel>
            <RibbonPanel title="多层楼梯" w={28} context>
                <BigTool icon="multi" lines={["连接", "标高"]} dim />
            </RibbonPanel>
            <RibbonPanel title="工作平面" w={100} context>
                <BigTool icon="setPlane" size={18} lines={["设置"]} dim caret w={24} />
                <BigTool icon="showPlane" size={18} lines={["显示"]} />
                <BigTool icon="refPlane" size={18} lines={["参照", "平面"]} />
                <BigTool icon="viewer" size={18} lines={["查看器"]} w={24} />
            </RibbonPanel>
            <RibbonPanel title="工具" w={106} context>
                <BigTool icon="convert" size={18} lines={["转换"]} dim />
                <BigTool icon="editSketch" size={18} lines={["编辑", "草图"]} dim />
                <BigTool icon="flip" size={18} lines={["翻转"]} dim w={30} />
                <BigTool icon="railing" size={18} lines={["栏杆扶手"]} w={31} />
            </RibbonPanel>
        </Ribbon>
    );
}

function Options() {
    const [offset, setOffset] = useState("0.0");
    const [width, setWidth] = useState("1000.0");
    const [landing, setLanding] = useState(true);

    return (
        <OptionsBar onSubmit={e => e.preventDefault()}>
            <label htmlFor="location">定位线:&nbsp;</label>
            <Picker $w={81} $tint="#d9e8e6">
                <select id="location"><option>梯段: 中心</option></select>
                <Glyph name="chevDown" size={6} />
            </Picker>
            <label htmlFor="offset">偏移:</label>
            <Field id="offset" value={offset} onChange={e => setOffset(e.target.value)} />
            <label htmlFor="width">实际梯段宽度:</label>
            <Field id="width" value={width} onChange={e => setWidth(e.target.value)} />
            <Check id="landing" type="checkbox" checked={landing} onChange={() => setLanding(!landing)} />
            <label htmlFor="landing">自动平台</label>
        </OptionsBar>
    );
}

function PropertiesPanel() {
    const [query, setQuery] = useState("");

    return (
        <Side $w={124}>
            <SideHeader>
                属性
                <ToolButton aria-label="关闭属性"><Glyph name="close" size={6} /></ToolButton>
            </SideHeader>
            <TypeSelector>
                <span>组合楼梯<br />190mm 最大踏面<br />250mm 梯段</span>
                <Glyph name="caret" size={5} />
            </TypeSelector>
            <TypeMenu>
                <SearchRow>
                    <input aria-label="搜索" placeholder="搜索" value={query} onChange={e => setQuery(e.target.value)} />
                    <Glyph name="search" size={8} />
                </SearchRow>
                <MenuGroup>现场浇注楼梯</MenuGroup>
                <MenuItem $hover>整体浇筑楼梯</MenuItem>
                <MenuGroup>组合楼梯</MenuGroup>
                <MenuItem $selected>190mm 最大踏面 250mm 梯段</MenuItem>
                <MenuItem>专用</MenuItem>
                <MenuItem>工业装配楼梯</MenuItem>
                <MenuItem>部分 M (已停用)</MenuItem>
                <MenuGroup>预浇注楼梯</MenuGroup>
                <MenuItem $short>预制楼梯</MenuItem>
                <Recent>最近使用的类型</Recent>
                <MenuItem $flush>组合楼梯 : 190mm 最大踏面 250mm 梯段</MenuItem>
                <MenuItem $flush $short>现场浇注楼梯 : 整体浇筑楼梯</MenuItem>
                <Pointer><Glyph name="cursor" size={12} /></Pointer>
            </TypeMenu>
            <PropertyArea>
                <PropertyTable>
                    <colgroup><col width="58" /><col /><col width="7" /></colgroup>
                    <tbody>
                        {properties.map(([name, value, thumb]) => value === undefined ? (
                            <GroupRow key={name}>
                                <th colSpan={2}>{name}</th>
                                <td><Glyph name="collapse" size={5} /></td>
                            </GroupRow>
                        ) : (
                            <tr key={name}>
                                <th scope="row">{name}</th>
                                <td>{value}</td>
                                <td>{thumb && <Thumb />}</td>
                            </tr>
                        ))}
                    </tbody>
                </PropertyTable>
            </PropertyArea>
            <SideFooter>
                <a href="#help">属性帮助</a>
                <button disabled>应用</button>
            </SideFooter>
        </Side>
    );
}

function DrawingArea() {
    return (
        <Center>
            <ViewTabs>
                <ViewTab $active>
                    <Glyph name="viewTab" size={9} />标高 1
                    <button aria-label="关闭视图"><Glyph name="close" size={6} /></button>
                </ViewTab>
                <ViewTab><Glyph name="cube3d" size={9} />{"{3D}"}</ViewTab>
                <TabMenu aria-label="视图列表"><Glyph name="more" size={7} /></TabMenu>
            </ViewTabs>
            <Canvas>
                <NavBar>
                    <Glyph name="ring" size={4} />
                    <Glyph name="wheel" size={14} />
                    <Glyph name="caret" size={4} />
                    <Glyph name="zoomRegion" size={12} />
                    <Glyph name="caret" size={4} />
                    <Glyph name="ring" size={4} />
                </NavBar>
                <VScroll>
                    <Glyph name="chevUp" size={5} />
                    <span />
                    <Glyph name="chevDownBold" size={5} />
                </VScroll>
            </Canvas>
            <ViewBar>
                <Scale>1 : 100</Scale>
                <ViewIcons>
                    {viewControls.map(icon => (
                        <button key={icon} aria-label={icon}><Glyph name={icon} size={icon === "chevLeft" ? 5 : 9} /></button>
                    ))}
                </ViewIcons>
                <HScroll>
                    <span />
                    <Glyph name="chevRight" size={5} />
                    <Glyph name="grip" size={7} />
                </HScroll>
            </ViewBar>
        </Center>
    );
}

function ProjectBrowser() {
    return (
        <Side $w={120} $browser>
            <SideHeader>
                项目浏览器 - 项目1
                <ToolButton $w={7} aria-label="关闭浏览器"><Glyph name="close" size={6} /></ToolButton>
            </SideHeader>
            <Tree>
                {browser.map(({ text, level, toggle, icon, selected }) => (
                    <TreeRow key={text} $level={level}>
                        {level < 2 && <Toggle aria-label={text}>{toggle && <Glyph name={toggle} size={7} />}</Toggle>}
                        <Branch $deep={level === 2} />
                        {icon && <Glyph name={icon} size={9} />}
                        <Leaf $selected={selected}>{text}</Leaf>
                    </TreeRow>
                ))}
            </Tree>
        </Side>
    );
}

function Status() {
    return (
        <StatusBar>
            <Message>单击输入梯段的起点。</Message>
            <Worksets>
                <Glyph name="work" size={11} dim />
                <Picker $w={115} $h={11}>
                    <select aria-label="工作集"><option></option></select>
                    <Glyph name="chevDown" size={6} dim />
                </Picker>
                <Glyph name="pencilLine" size={10} dim />
                <Count>:0</Count>
                <Glyph name="grid" size={10} />
                <Glyph name="option" size={10} />
                <Picker $w={115} $h={11}>
                    <select aria-label="设计选项"><option>主模型</option></select>
                    <Glyph name="chevDown" size={6} dim />
                </Picker>
            </Worksets>
            <Selection>
                {selectionTools.map(icon => <Glyph key={icon} name={icon} size={10} />)}
                <Glyph name="filter" size={10} />
                <span>:0</span>
            </Selection>
        </StatusBar>
    );
}

function App() {
    return (
        <>
            <GlobalStyle />
            <Page>
                <TitleBar>
                    <QuickAccess />
                    <Title>Autodesk Revit 2023 - 项目1 - 楼层平面: 标高 1</Title>
                    <Account>
                        <Glyph name="caretLeft" size={5} />
                        <ToolButton aria-label="搜索帮助"><Glyph name="binoculars" size={10} /></ToolButton>
                        <Glyph name="user" size={10} />
                        <button>登录</button>
                    </Account>
                    <Store>
                        <Glyph name="caret" size={4} />
                        <ToolButton aria-label="应用商店"><Glyph name="cart" size={10} /></ToolButton>
                        <ToolButton aria-label="帮助"><Glyph name="help" size={10} /></ToolButton>
                        <Glyph name="caret" size={4} />
                    </Store>
                    <WindowButtons>
                        <ToolButton aria-label="最小化"><Glyph name="minimize" size={7} /></ToolButton>
                        <ToolButton aria-label="还原"><Glyph name="restore" size={8} /></ToolButton>
                        <ToolButton aria-label="关闭"><Glyph name="close" size={8} /></ToolButton>
                    </WindowButtons>
                </TitleBar>
                <TabRow>
                    <FileTab>文件</FileTab>
                    <TabList>
                        {tabs.map(tab => <Tab key={tab}>{tab}</Tab>)}
                    </TabList>
                    <ActiveTab>修改 | 创建楼梯</ActiveTab>
                    <PlayTab aria-label="功能区显示"><Glyph name="play" size={9} /><Glyph name="caret" size={4} /></PlayTab>
                </TabRow>
                <RibbonPanels />
                <Options />
                <Work>
                    <PropertiesPanel />
                    <DrawingArea />
                    <ProjectBrowser />
                </Work>
                <Status />
            </Page>
        </>
    );
}

export default App;
